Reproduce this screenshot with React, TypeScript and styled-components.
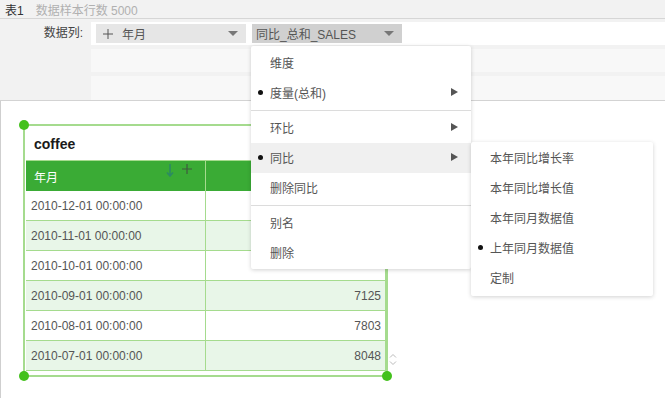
import React from 'react'
import styled, { createGlobalStyle } from 'styled-components'

const GlobalStyle = createGlobalStyle`
  html, body {
    margin: 0;
    padding: 0;
    background: #fff;
    font-family: "Liberation Sans", "Noto Sans CJK SC", sans-serif;
    font-size: 12px;
  }
`

const Page = styled.div`
  position: relative;
  width: 665px;
  height: 398px;
  overflow: hidden;
`
const TopBar = styled.div`
  height: 18px;
  display: flex;
  align-items: center;
  padding-left: 5px;
  background: #f2f2f2;
  border-bottom: 1px solid #d6d6d6;
  color: #333;
`
const SampleInfo = styled.span`
  margin-left: 12px;
  color: #b0b0b0;
`
const ConfigPanel = styled.div`
  height: 82px;
  background: #f2f2f2;
  border-bottom: 1px solid #d3d3d3;
  display: grid;
  grid-template-columns: 91px 1fr;
  grid-template-rows: 23px 23px 24px;
  row-gap: 4px;
  padding-top: 3px;
  box-sizing: border-box;
`
const FieldLabel = styled.div`
  text-align: right;
  padding-right: 8px;
  line-height: 23px;
  color: #444;
`
const Lane = styled.div<{ $white?: boolean }>`
  grid-column: 2;
  background: ${p => (p.$white ? '#fff' : '#f8f8f8')};
  display: flex;
  align-items: center;
  gap: 6px;
  padding-left: 5px;
`
const Chip = styled.div<{ $active?: boolean }>`
  width: 150px;
  height: 19px;
  box-sizing: border-box;
  display: flex;
  align-items: center;
  padding: 0 8px 0 4px;
  background: ${p => (p.$active ? '#d0d0d0' : '#e6e6e6')};
  color: #555;
  font-size: 12px;
`
const ChipText = styled.span`
  flex: 1;
  white-space: nowrap;
`
const PlusIcon = styled.svg`
  margin: 0 9px 0 3px;
`
const Caret = styled.span`
  width: 0;
  height: 0;
  border-left: 5px solid transparent;
  border-right: 5px solid transparent;
  border-top: 5px solid #777;
`
const Canvas = styled.div`
  height: 297px;
  border-left: 1px solid #cfcfcf;
  padding: 23px 0 0 22px;
  box-sizing: border-box;
`
const Frame = styled.div`
  position: relative;
  width: 365px;
  height: 253px;
  box-sizing: border-box;
  border: 2px solid #a5db8e;
  padding-left: 1px;
`
const Handle = styled.span<{ $x: 'l' | 'r'; $y: 't' | 'b' }>`
  position: absolute;
  width: 10px;
  height: 10px;
  border-radius: 50%;
  background: #43c11c;
  ${p => (p.$x === 'l' ? 'left: -6px;' : 'right: -6px;')}
  ${p => (p.$y === 't' ? 'top: -6px;' : 'bottom: -6px;')}
`
const WidgetTitle = styled.div`
  height: 34px;
  display: flex;
  align-items: center;
  padding: 2px 0 0 8px;
  box-sizing: border-box;
  font-weight: bold;
  font-size: 14px;
  color: #1a1a1a;
`
const Table = styled.div`
  width: 360px;
  display: grid;
  grid-template-columns: 180px 180px;
  border-top: 1px solid #a5db8e;
`
const HeadCell = styled.div`
  position: relative;
  height: 30px;
  box-sizing: border-box;
  background: #3aab35;
  color: #fff;
  display: flex;
  align-items: center;
  padding-left: 8px;
  border-right: 1px solid #a5db8e;
  font-size: 12px;
`
const HeadIcons = styled.div`
  position: absolute;
  right: 13px;
  top: 3px;
  display: flex;
  align-items: flex-start;
  gap: 8px;
`
const Cell = styled.div<{ $alt?: boolean; $num?: boolean }>`
  height: 30px;
  box-sizing: border-box;
  display: flex;
  align-items: center;
  justify-content: ${p => (p.$num ? 'flex-end' : 'flex-start')};
  padding: 0 4px 0 5px;
  background: ${p => (p.$alt ? '#e8f6e8' : '#fff')};
  border-bottom: 1px solid #a5db8e;
  border-right: 1px solid #a5db8e;
  color: #555;
  font-size: 12px;
`
const ScrollMark = styled.svg`
  position: absolute;
  right: -11px;
  bottom: 9px;
`
const Menu = styled.div`
  position: absolute;
  left: 251px;
  top: 46px;
  width: 220px;
  padding: 2px 0 1px;
  background: #fff;
  box-shadow: 0 1px 4px rgba(0, 0, 0, 0.18);
  border-radius: 2px;
  z-index: 10;
`
const Item = styled.div<{ $hover?: boolean }>`
  position: relative;
  height: 30px;
  box-sizing: border-box;
  display: flex;
  align-items: center;
  padding: 0 0 1px 19px;
  color: #555;
  font-size: 12px;
  background: ${p => (p.$hover ? '#f0f0f0' : 'transparent')};
`
const Bullet = styled.span`
  position: absolute;
  left: 7px;
  top: 12px;
  width: 5px;
  height: 5px;
  border-radius: 50%;
  background: #111;
`
const Arrow = styled.span`
  position: absolute;
  right: 13px;
  top: 10px;
  width: 0;
  height: 0;
  border-top: 4px solid transparent;
  border-bottom: 4px solid transparent;
  border-left: 7px solid #555;
`
const Separator = styled.div`
  height: 1px;
  margin: 2px 0;
  background: #dcdcdc;
`
const SubMenu = styled.div`
  position: absolute;
  left: 100%;
  top: -1px;
  width: 182px;
  padding: 1px 0 3px;
  background: #fff;
  box-shadow: 0 1px 4px rgba(0, 0, 0, 0.18);
  border-radius: 2px;
`

const rows = [
  { date: '2010-12-01 00:00:00', value: '' },
  { date: '2010-11-01 00:00:00', value: '' },
  { date: '2010-10-01 00:00:00', value: '' },
  { date: '2010-09-01 00:00:00', value: '7125' },
  { date: '2010-08-01 00:00:00', value: '7803' },
  { date: '2010-07-01 00:00:00', value: '8048' },
]

const subItems = ['本年同比增长率', '本年同比增长值', '本年同月数据值', '上年同月数据值', '定制']

export default function App() {
  return (
    <Page>
      <GlobalStyle />
      <TopBar>
        表1<SampleInfo>数据样本行数 5000</SampleInfo>
      </TopBar>
      <ConfigPanel>
        <FieldLabel>数据列:</FieldLabel>
        <Lane $white>
          <Chip>
            <PlusIcon width="10" height="10" viewBox="0 0 10 10">
              <path d="M5 0v10M0 5h10" stroke="#555" strokeWidth="1" />
            </PlusIcon>
            <ChipText>年月</ChipText>
            <Caret />
          </Chip>
          <Chip $active>
            <ChipText>同比_总和_SALES</ChipText>
            <Caret />
          </Chip>
        </Lane>
        <Lane />
        <Lane />
      </ConfigPanel>
      <Canvas>
        <Frame>
          <Handle $x="l" $y="t" />
          <Handle $x="r" $y="t" />
          <Handle $x="l" $y="b" />
          <Handle $x="r" $y="b" />
          <WidgetTitle>coffee</WidgetTitle>
          <Table>
            <HeadCell>
              年月
              <HeadIcons>
                <svg width="8" height="13" viewBox="0 0 8 13">
                  <path d="M4 0v12M1 8.5l3 3.5 3-3.5" stroke="#2c8a63" strokeWidth="1.6" fill="none" />
                </svg>
                <svg width="10" height="10" viewBox="0 0 10 10">
                  <path d="M5 0v10M0 5h10" stroke="#3f5a3f" strokeWidth="1.2" />
                </svg>
              </HeadIcons>
            </HeadCell>
            <HeadCell />
            {rows.map((r, i) => (
              <React.Fragment key={r.date}>
                <Cell $alt={i % 2 === 1}>{r.date}</Cell>
                <Cell $alt={i % 2 === 1} $num>{r.value}</Cell>
              </React.Fragment>
            ))}
          </Table>
          <ScrollMark width="8" height="13" viewBox="0 0 8 13">
            <path d="M1 4.5l3-3 3 3M1 8.5l3 3 3-3" stroke="#bbb" strokeWidth="1" fill="none" />
          </ScrollMark>
        </Frame>
      </Canvas>
      <Menu>
        <Item>维度</Item>
        <Item>
          <Bullet />度量(总和)<Arrow />
        </Item>
        <Separator />
        <Item>
          环比<Arrow />
        </Item>
        <Item $hover>
          <Bullet />同比<Arrow />
          <SubMenu>
            {subItems.map((s, i) => (
              <Item key={s}>
                {i === 3 && <Bullet />}
                {s}
              </Item>
            ))}
          </SubMenu>
        </Item>
        <Item>删除同比</Item>
        <Separator />
        <Item>别名</Item>
        <Item>删除</Item>
      </Menu>
    </Page>
  )
}
